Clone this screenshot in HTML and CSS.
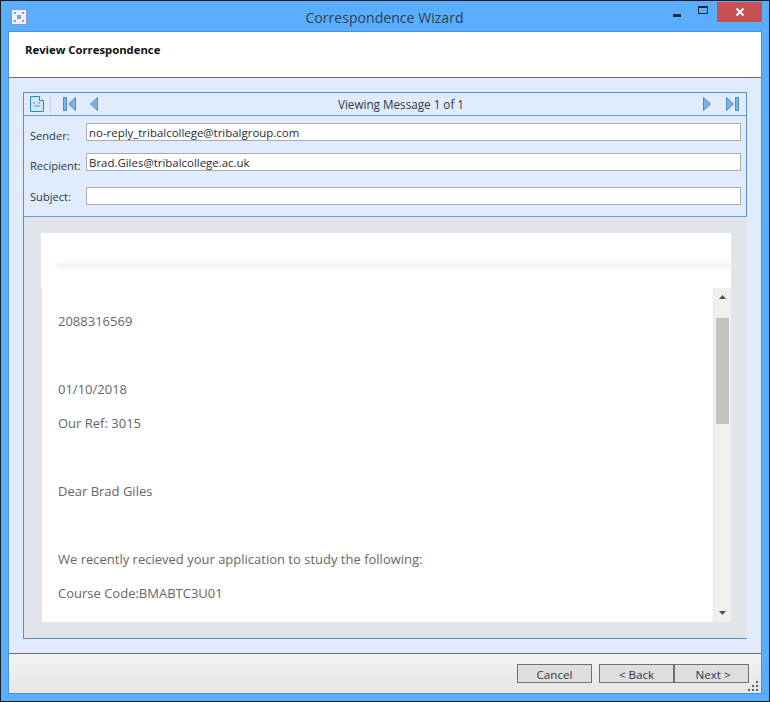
FILE: index.html
```html
<!DOCTYPE html>
<html lang="en">
<head>
<meta charset="utf-8">
<title>Correspondence Wizard</title>
<link rel="stylesheet" href="styles.css">
</head>
<body>
<div class="window">
  <div class="titlebar">
    <svg class="app-icon" width="16" height="16" viewBox="0 0 16 16"><rect x=".5" y=".5" width="15" height="15" fill="#eef3fb" stroke="#9d8fc4"/><rect x="6" y="6" width="4" height="4" fill="#7f9fd8"/><rect x="3" y="3" width="2" height="2" fill="#4bb4e8"/><rect x="11" y="3" width="2" height="2" fill="#4bb4e8"/><rect x="3" y="11" width="2" height="2" fill="#4bb4e8"/><rect x="11" y="11" width="2" height="2" fill="#4bb4e8"/></svg>
    <div class="title">Correspondence Wizard</div>
    <div class="win-controls">
      <div class="ctl ctl-min"><span class="min-glyph"></span></div>
      <div class="ctl ctl-max"><span class="max-glyph"></span></div>
      <div class="ctl ctl-close"><svg width="10" height="10" viewBox="0 0 10 10"><path d="M1.5 1.5l7 7M8.5 1.5l-7 7" stroke="#fff" stroke-width="2"/></svg></div>
    </div>
  </div>
  <div class="client">
    <header class="head">Review Correspondence</header>
    <main class="body">
      <section class="panel">
        <div class="toolbar">
          <svg class="ico-doc" width="14" height="16" viewBox="0 0 14 16"><path d="M.5.5h9l4 4v11H.5z" fill="#cfe6f7" stroke="#2f86c0"/><path d="M9.5.5v4h4" fill="#fff" stroke="#2f86c0"/><path d="M3 7h2M8 7h2M4 10h6" stroke="#5a8fb5"/></svg>
          <span class="tb-sep"></span>
          <div class="nav-left">
            <svg width="13" height="14" viewBox="0 0 13 14"><rect x=".5" y=".5" width="3" height="13" fill="#7fb2dd" stroke="#4a8cc4"/><path d="M12.5.5v13L5.5 7z" fill="#7fb2dd" stroke="#4a8cc4"/></svg>
            <svg width="8" height="14" viewBox="0 0 8 14"><path d="M7.5.5v13L.5 7z" fill="#7fb2dd" stroke="#4a8cc4"/></svg>
          </div>
          <div class="viewing">Viewing Message 1 of 1</div>
          <div class="nav-right">
            <svg width="8" height="14" viewBox="0 0 8 14"><path d="M.5.5v13L7.5 7z" fill="#7fb2dd" stroke="#4a8cc4"/></svg>
            <svg width="13" height="14" viewBox="0 0 13 14"><path d="M.5.5v13L7.5 7z" fill="#7fb2dd" stroke="#4a8cc4"/><rect x="9.5" y=".5" width="3" height="13" fill="#7fb2dd" stroke="#4a8cc4"/></svg>
          </div>
        </div>
        <div class="fields">
          <div class="field f-sender"><label class="lbl-low">Sender:</label><div class="input">no-reply_tribalcollege@tribalgroup.com</div></div>
          <div class="field f-recipient"><label class="lbl-low">Recipient:</label><div class="input">Brad.Giles@tribalcollege.ac.uk</div></div>
          <div class="field f-subject"><label>Subject:</label><div class="input"></div></div>
        </div>
        <div class="preview">
          <div class="mail-head"><div class="blur-line"></div></div>
          <div class="mail-body">
            <div class="mail-text">
              <p>2088316569</p>
              <p class="blank"></p>
              <p>01/10/2018</p>
              <p>Our Ref: 3015</p>
              <p class="blank"></p>
              <p>Dear Brad Giles</p>
              <p class="blank"></p>
              <p>We recently recieved your application to study the following:</p>
              <p>Course Code:BMABTC3U01</p>
            </div>
            <div class="scrollbar">
              <svg class="arrow" width="7" height="4" viewBox="0 0 7 4"><path d="M3.5 0L7 4H0z" fill="#505050"/></svg>
              <div class="thumb"></div>
              <svg class="arrow" width="7" height="4" viewBox="0 0 7 4"><path d="M0 0h7L3.5 4z" fill="#505050"/></svg>
            </div>
          </div>
        </div>
      </section>
    </main>
    <footer class="foot">
      <button class="btn btn-cancel">Cancel</button>
      <button class="btn">&lt; Back</button>
      <button class="btn btn-next">Next &gt;</button>
      <svg class="grip" width="11" height="11" viewBox="0 0 11 11"><path d="M8 0h2v2H8zM4 4h2v2H4zM8 4h2v2H8zM0 8h2v2H0zM4 8h2v2H4zM8 8h2v2H8z" fill="#51606e"/></svg>
    </footer>
  </div>
</div>
</body>
</html>
```
FILE: styles.css
```css
* { box-sizing: border-box; }
html, body { margin: 0; padding: 0; }
body { width: 770px; height: 702px; overflow: hidden; font-family: "Open Sans", "Noto Sans", sans-serif; }

.window {
  width: 770px; height: 702px; display: flex; flex-direction: column;
  background: #5aaeff; border: 1px solid #1c1c1c;
  padding: 0 8px 8px 8px;
}
.titlebar { height: 31px; flex: none; position: relative; display: flex; align-items: center; justify-content: center; }
.app-icon { position: absolute; left: 2px; top: 8px; }
.title { font-size: 14.1px; color: #2f3f50; margin-top: 1px; padding-right: 1px; }
.win-controls { position: absolute; top: 1px; right: -1px; display: flex; height: 20px; }
.ctl { display: flex; align-items: center; justify-content: center; }
.ctl-min { width: 26px; }
.ctl-max { width: 26px; margin-right: 1px; }
.ctl-close { width: 45px; background: #c75050; }
.min-glyph { width: 8px; height: 3px; background: #1f2b38; margin-top: 7px; }
.max-glyph { width: 10px; height: 8px; border: 1px solid #1f2b38; border-top-width: 2px; margin-top: -4px; }

.client { flex: 1; display: flex; flex-direction: column; outline: 1px solid #4f8fd6; background: #fff; min-height: 0; }
.head { height: 46px; flex: none; padding: 10px 16px 0; font-size: 11.3px; line-height: 16px; font-weight: 700; color: #111; background: #fff; border-bottom: 1px solid #6d6d6d; }
.body { flex: 1; min-height: 0; padding: 14px; background: #e0ecfd; display: flex; }
.foot {
  height: 40px; flex: none; position: relative; display: flex; align-items: flex-start;
  padding: 10px 0 0 508px; background: linear-gradient(#f3f3f3, #e6e6e6); border-top: 1px solid #6d6d6d;
}
.panel { flex: 1; display: flex; flex-direction: column; border: 1px solid #5b8fd0; border-right-width: 0; min-width: 0; width: 724px; }

.toolbar { height: 23px; flex: none; display: flex; align-items: center; border-bottom: 1px solid #6a9ad6; border-right: 1px solid #5b8fd0; padding: 0 7px 0 6px; }
.ico-doc { flex: none; }
.tb-sep { width: 1px; height: 17px; background: #c3ccd6; margin: 0 12px 0 6px; flex: none; }
.nav-left { display: flex; gap: 14px; align-items: center; flex: none; }
.nav-right { display: flex; gap: 15px; align-items: center; flex: none; }
.viewing { flex: 1; text-align: center; font-size: 11.7px; color: #2c3844; padding-left: 1px; }

.fields { height: 101px; flex: none; border-bottom: 1px solid #6a9ad6; border-right: 1px solid #5b8fd0; padding: 7px 5px 0 5px; display: flex; flex-direction: column; }
.field { display: flex; height: 18px; flex: none; align-items: center; }
.f-recipient { margin-top: 12px; }
.f-subject { margin-top: 16px; }
.field label { width: 57px; flex: none; font-size: 11.1px; color: #2c3844; white-space: nowrap; padding: 1px 0 0 1px; }
.field label.lbl-low { padding-top: 7px; }
.input { flex: 1; height: 18px; background: #fff; border: 1px solid #aaa; font-size: 11.45px; line-height: 17px; padding: 0 2px; color: #1e2a36; white-space: nowrap; overflow: hidden; }

.preview { flex: 1; min-height: 0; background: #e1e5e9; padding: 16px 16px 16px 17px; display: flex; flex-direction: column; }
.mail-head { height: 55px; flex: none; background: #fff; position: relative; }
.blur-line { position: absolute; left: 15px; right: 0; top: 30px; height: 5px; background: #efefef; filter: blur(2px); }
.mail-body { flex: 1; min-height: 0; display: flex; margin-left: 1px; }
.mail-text { flex: 1; background: #fff; padding: 24px 16px 0; overflow: hidden; font-size: 13px; line-height: 18px; color: #666; }
.mail-text p { margin: 0 0 16px; }
.mail-text p.blank { height: 18px; }
.scrollbar { width: 18px; flex: none; background: #f0f0f0; border-left: 1px solid #e8e8e8; display: flex; flex-direction: column; align-items: center; }
.arrow { flex: none; margin-right: 1px; }
.arrow:first-child { margin-top: 7px; }
.arrow:last-child { margin-top: 187px; }
.thumb { width: 13px; height: 106px; background: #c2c2c2; margin: 19px 1px 0 0; flex: none; }

.btn { height: 19px; width: 75px; padding: 1px 0 0; margin: 0; background: #dedede; border: 1px solid #707070; font-family: inherit; font-size: 11.6px; line-height: 15px; color: #2c3844; }
.btn-cancel { margin-right: 7px; }
.btn-next { margin-left: -1px; border-width: 1px 1px 1px 2px; width: 76px; padding-left: 3px; }
.grip { position: absolute; right: 2px; bottom: 1px; }
```
